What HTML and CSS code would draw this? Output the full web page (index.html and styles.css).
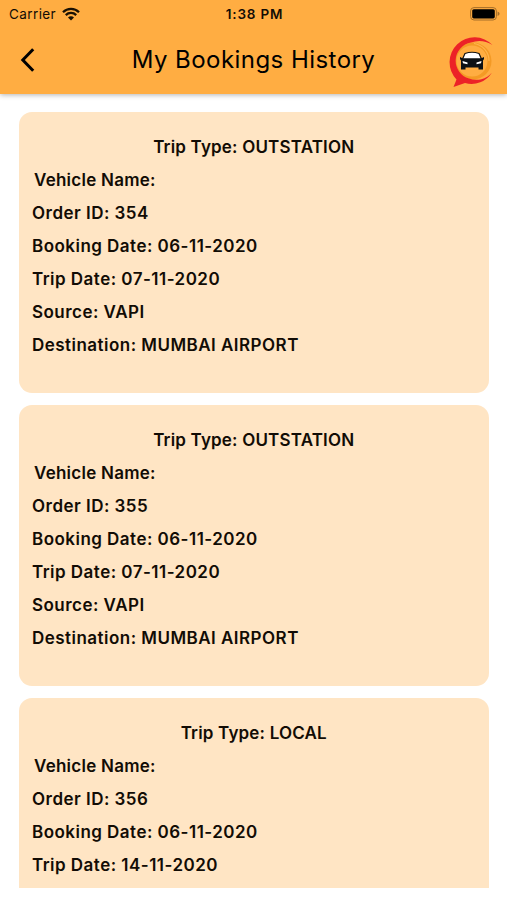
FILE: index.html
```html
<!DOCTYPE html>
<html lang="en">
<head>
    <meta charset="UTF-8">
    <meta name="viewport" content="width=device-width, initial-scale=1.0">
    <title>My Bookings History</title>
    <link rel="stylesheet" href="styles.css">
</head>
<body>
    <header class="header">
        <div class="status-bar">
            <div class="carrier">
                <span>Carrier</span>
                <svg class="wifi" viewBox="0 0 18 14" width="18" height="14">
                    <path d="M1 5.200a11.400 11.400 0 0 1 16 0M3.800 8.100a7.400 7.400 0 0 1 10.400 0" fill="none" stroke="#1a1103" stroke-width="2.3"/>
                    <path d="M9 13.500L6 10.600a4.200 4.200 0 0 1 6 0z" fill="#1a1103"/>
                </svg>
            </div>
            <div class="time">1:38 PM</div>
            <svg class="battery" viewBox="0 0 30 14" width="30" height="14">
                <rect x=".6" y=".6" width="25.8" height="12.4" rx="3.4" fill="none" stroke="#a66f29" stroke-width="1"/>
                <rect x="2.2" y="2.2" width="22.6" height="9.2" rx="1.6"/>
                <path d="M27.600 4.600v4.400q2-.8 2-2.200t-2-2.200z" fill="#a66f29"/>
            </svg>
        </div>
        <div class="nav-bar">
            <svg class="back" viewBox="0 0 16 26" width="16" height="26">
                <path d="M13.200 2.200L2.800 13l10.400 10.800" fill="none" stroke="#000" stroke-width="3"/>
            </svg>
            <h1>My Bookings History</h1>
            <svg class="logo" viewBox="0 0 48 52" width="48" height="52">
                <circle cx="26" cy="25" r="18.5" fill="#f49a25"/>
                <circle cx="25" cy="25" r="15.500" fill="#ffad42"/>
                <path d="M27 7.500A17.500 17.500 0 0 1 42 25" fill="none" stroke="#ffb44e" stroke-width="1.2"/>
                <path d="M45.500 9A23.300 23.300 0 1 0 9.500 43.500L6.500 51L18 47A24 24 0 0 0 45 36.500A20.500 20.500 0 0 1 22 42.500A18.500 18.500 0 0 1 24 6.500Q35 2.500 45.500 9z" fill="#ec2227"/>
                <path d="M15.500 23L18 17.500Q25 15 32 17.500L34.500 23z" fill="#fff" stroke="#111" stroke-width="1.2"/>
                <path d="M13 21l3 1.500h18l3-1.500v2l-1 1.500v9h-4.500v-2h-13v2H14v-9l-1-1.500z" fill="#0b1015"/>
                <path d="M15.500 25l5 1.500v1.800l-4.500-1zM34.500 25l-5 1.500v1.800l4.500-1z" fill="#fff"/>
            </svg>
        </div>
    </header>

    <main class="bookings">
        <section class="card">
            <h2>Trip Type: OUTSTATION</h2>
            <p class="vehicle">Vehicle Name:</p>
            <p>Order ID: 354</p>
            <p>Booking Date: 06-11-2020</p>
            <p>Trip Date: 07-11-2020</p>
            <p>Source: VAPI</p>
            <p>Destination: MUMBAI AIRPORT</p>
        </section>
        <section class="card">
            <h2>Trip Type: OUTSTATION</h2>
            <p class="vehicle">Vehicle Name:</p>
            <p>Order ID: 355</p>
            <p>Booking Date: 06-11-2020</p>
            <p>Trip Date: 07-11-2020</p>
            <p>Source: VAPI</p>
            <p>Destination: MUMBAI AIRPORT</p>
        </section>
        <section class="card">
            <h2>Trip Type: LOCAL</h2>
            <p class="vehicle">Vehicle Name:</p>
            <p>Order ID: 356</p>
            <p>Booking Date: 06-11-2020</p>
            <p>Trip Date: 14-11-2020</p>
        </section>
    </main>
</body>
</html>
```

FILE: styles.css
```css
* {
    box-sizing: border-box;
}

body {
    margin: 0;
    height: 100vh;
    display: flex;
    flex-direction: column;
    overflow: hidden;
    background: #fff;
    color: #120c05;
    font-family: Inter, 'Liberation Sans', sans-serif;
}

/* Header */
.header {
    flex: none;
    height: 94px;
    background: #ffad42;
    box-shadow: 0 1px 5px rgba(0, 0, 0, 0.3);
}

.status-bar {
    display: grid;
    grid-template-columns: 1fr auto 1fr;
    align-items: center;
    height: 27px;
    padding: 0 7px 0 9px;
    font-size: 13.5px;
}

.carrier {
    display: flex;
    align-items: center;
    gap: 6px;
    letter-spacing: 0.4px;
}

.time {
    font-weight: 600;
    letter-spacing: 0.8px;
}

.battery {
    justify-self: end;
}

.nav-bar {
    display: grid;
    grid-template-columns: 60px 1fr 60px;
    align-items: center;
    height: 67px;
    padding-bottom: 2px;
}

.back {
    margin-left: 20px;
}

.logo {
    margin-top: 4px;
}

h1 {
    margin: 0;
    text-align: center;
    font-size: 24px;
    font-weight: 400;
    letter-spacing: 0.45px;
    color: #000;
}

/* Booking list */
.bookings {
    flex: 1;
    display: flex;
    flex-direction: column;
    gap: 12px;
    margin: 18px 18.5px 12px 19px;
    overflow: hidden;
}

.card {
    flex: none;
    height: 281px;
    padding: 19px 13px;
    border-radius: 13px;
    background: #ffe5c4;
    font-size: 17px;
    font-weight: 600;
    line-height: 33px;
    letter-spacing: 0.47px;
}

.card h2 {
    margin: 0;
    text-align: center;
    font-size: inherit;
    font-weight: inherit;
    letter-spacing: 0.18px;
}

.card p {
    margin: 0;
}

.card .vehicle {
    padding-left: 2px;
    letter-spacing: 0.25px;
}
```
